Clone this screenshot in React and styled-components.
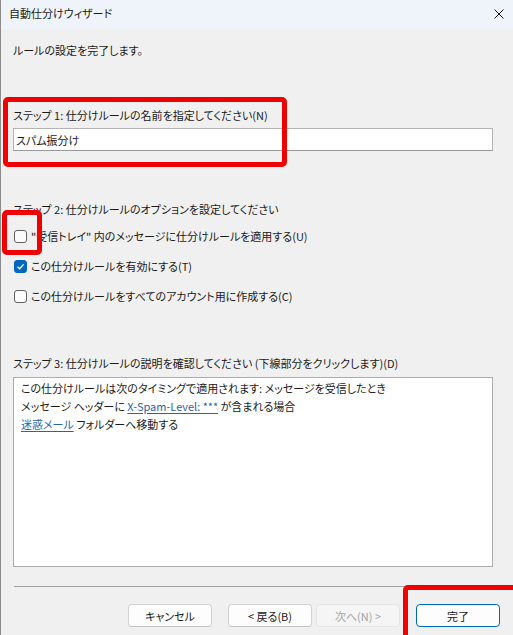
import React from "react";
import styled, { createGlobalStyle, css } from "styled-components";

const GlobalStyle = createGlobalStyle`
  html, body {
    margin: 0;
    padding: 0;
    background: #f0f0f0;
  }
  body {
    font-family: "Noto Sans CJK JP", "Noto Sans", sans-serif;
    font-size: 11px;
    color: #1a1a1a;
    font-feature-settings: "palt";
  }
`;

const Window = styled.div`
  position: relative;
  width: 513px;
  height: 635px;
  box-sizing: border-box;
  background: #f0f0f0;
  border-left: 1px solid #8c8c8c;
  overflow: hidden;
  display: flex;
  flex-direction: column;
`;

const TitleBar = styled.div`
  height: 29px;
  flex: none;
  display: flex;
  align-items: center;
  justify-content: space-between;
  padding: 0 9px 3px 8px;
  box-sizing: border-box;
  background: #eef4f9;
  line-height: 16px;
`;

const CloseButton = styled.span`
  display: flex;
  width: 10px;
  height: 10px;
  margin-top: 2px;
`;

const Body = styled.div`
  flex: 1;
  display: flex;
  flex-direction: column;
  padding: 0 20px 0 12px;
`;

const Text = styled.div`
  line-height: 16px;
  margin-top: ${(p) => p.$mt || 0}px;
  white-space: nowrap;
`;

const TextInput = styled.div`
  margin-top: 5px;
  height: 23px;
  box-sizing: border-box;
  background: #ffffff;
  border: 1px solid #b4b4b4;
  border-bottom-color: #9a9a9a;
  padding: 0 2px;
  display: flex;
  align-items: center;
  line-height: 16px;
`;

const OptionList = styled.div`
  display: flex;
  flex-direction: column;
  gap: 14px;
  margin-top: 11px;
`;

const Option = styled.label`
  display: flex;
  align-items: center;
  gap: 4px;
  line-height: 16px;
  white-space: nowrap;
`;

const Box = styled.span`
  width: 13px;
  height: 13px;
  box-sizing: border-box;
  margin-left: 1px;
  border-radius: 3px;
  border: 1px solid #616161;
  background: #fbfbfb;
  display: flex;
  align-items: center;
  justify-content: center;
  ${(p) =>
    p.$checked &&
    css`
      border-color: #0067c0;
      background: #0067c0;
    `}
`;

const Description = styled.div`
  margin-top: 6px;
  height: 190px;
  box-sizing: border-box;
  background: #ffffff;
  border: 1px solid #acacac;
  padding: 1px 7px;
  line-height: 18px;
`;

const Link = styled.span`
  color: #2a64a8;
  text-decoration: underline;
  text-underline-offset: 2px;
`;

const Separator = styled.div`
  margin: 19px -20px 0 1px;
  height: 1px;
  background: #a0a0a0;
`;

const ButtonRow = styled.div`
  display: flex;
  justify-content: flex-end;
  margin: 17px -7px 0 0;
`;

const Button = styled.button`
  width: 84px;
  height: 23px;
  margin-left: ${(p) => p.$ml}px;
  box-sizing: border-box;
  font-family: inherit;
  font-feature-settings: "palt";
  font-size: 11px;
  color: #1a1a1a;
  background: #fdfdfd;
  border: 1px solid #d3d3d3;
  border-bottom-color: #c2c2c2;
  border-radius: 4px;
  padding: 0;
  ${(p) =>
    p.$primary &&
    css`
      border: 1px solid #0067c0;
    `}
  ${(p) =>
    p.disabled &&
    css`
      color: #a3a3a3;
      background: #f5f5f5;
      border-color: #e5e5e5;
    `}
`;

const Highlight = styled.div`
  position: absolute;
  box-sizing: border-box;
  border: 5px solid #f00000;
  border-radius: 5px;
  left: ${(p) => p.$x}px;
  top: ${(p) => p.$y}px;
  width: ${(p) => p.$w}px;
  height: ${(p) => p.$h}px;
  pointer-events: none;
`;

function Check({ checked }) {
  return (
    <Box $checked={checked}>
      {checked && (
        <svg width="9" height="9" viewBox="0 0 9 9">
          <path d="M1.5 4.8 L3.6 6.8 L7.6 2.4" fill="none" stroke="#fff" strokeWidth="1.3" />
        </svg>
      )}
    </Box>
  );
}

export default function App() {
  return (
    <>
      <GlobalStyle />
      <Window>
        <TitleBar>
          <span>自動仕分けウィザード</span>
          <CloseButton>
            <svg width="10" height="10" viewBox="0 0 10 10">
              <path d="M0.5 0.5 L9.5 9.5 M9.5 0.5 L0.5 9.5" stroke="#1a1a1a" strokeWidth="1" />
            </svg>
          </CloseButton>
        </TitleBar>
        <Body>
          <Text $mt={13}>ルールの設定を完了します。</Text>

          <Text $mt={49}>ステップ 1: 仕分けルールの名前を指定してください(N)</Text>
          <TextInput>スパム振分け</TextInput>

          <Text $mt={50}>ステップ 2: 仕分けルールのオプションを設定してください</Text>
          <OptionList>
            <Option>
              <Check />
              "受信トレイ" 内のメッセージに仕分けルールを適用する(U)
            </Option>
            <Option>
              <Check checked />
              この仕分けルールを有効にする(T)
            </Option>
            <Option>
              <Check />
              この仕分けルールをすべてのアカウント用に作成する(C)
            </Option>
          </OptionList>

          <Text $mt={51}>ステップ 3: 仕分けルールの説明を確認してください (下線部分をクリックします)(D)</Text>
          <Description>
            <div>この仕分けルールは次のタイミングで適用されます: メッセージを受信したとき</div>
            <div>
              メッセージ ヘッダーに <Link>X-Spam-Level: ***</Link> が含まれる場合
            </div>
            <div>
              <Link>迷惑メール</Link> フォルダーへ移動する
            </div>
          </Description>

          <Separator />
          <ButtonRow>
            <Button $ml={0}>キャンセル</Button>
            <Button $ml={16}>&lt; 戻る(B)</Button>
            <Button $ml={4} disabled>
              次へ(N) &gt;
            </Button>
            <Button $ml={16} $primary>
              完了
            </Button>
          </ButtonRow>
        </Body>

        <Highlight $x={2} $y={97} $w={284} $h={70} />
        <Highlight $x={1} $y={210} $w={40} $h={45} />
        <Highlight $x={402} $y={585} $w={120} $h={60} />
      </Window>
    </>
  );
}
